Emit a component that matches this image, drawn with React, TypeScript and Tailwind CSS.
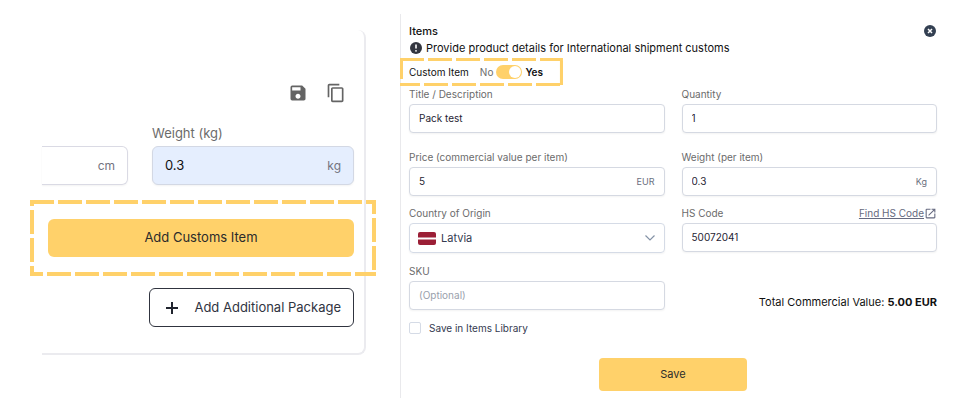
import { useState, type ReactNode } from 'react'
import { MdContentCopy, MdOutlineOpenInNew, MdSave } from 'react-icons/md'

type DashedFrameProps = {
  thickness: number
  offsets: { top: number; right: number; bottom: number; left: number }
}

type FieldProps = {
  id: string
  label: string
  defaultValue?: string
  placeholder?: string
  unit?: string
  action?: ReactNode
}

// Strokes sit on the edges of the svg, so only the inner half is painted
function DashedFrame({ thickness, offsets }: DashedFrameProps) {
  return (
    <svg
      aria-hidden="true"
      className="absolute inset-0 h-full w-full pointer-events-none"
      stroke="#ffd16a"
      strokeWidth={thickness * 2}
      strokeDasharray="24 4"
    >
      <line x1="0" y1="0" x2="100%" y2="0" strokeDashoffset={offsets.top} />
      <line x1="100%" y1="0" x2="100%" y2="100%" strokeDashoffset={offsets.right} />
      <line x1="0" y1="100%" x2="100%" y2="100%" strokeDashoffset={offsets.bottom} />
      <line x1="0" y1="0" x2="0" y2="100%" strokeDashoffset={offsets.left} />
    </svg>
  )
}

function Field({ id, label, defaultValue, placeholder, unit, action }: FieldProps) {
  return (
    <div>
      <div className="flex items-center justify-between h-4 mb-0.5">
        <label htmlFor={id} className="text-[10px] text-[#6b6b6b]">{label}</label>
        {action}
      </div>
      <div className="flex items-center h-[29px] px-[9px] rounded border border-[#d5d9e2] bg-white shadow-xs">
        <input
          id={id}
          type="text"
          defaultValue={defaultValue}
          placeholder={placeholder}
          className="flex-1 min-w-0 text-[10px] text-[#1f2433] placeholder:text-[#9a9fac] outline-none"
        />
        {unit && <span className="text-[9px] text-[#6b7080]">{unit}</span>}
      </div>
    </div>
  )
}

function PackageCard() {
  return (
    <section className="min-w-0 mt-[30px] pl-1.5 pr-2.5 pt-[53px] pb-[26px] border-r-2 border-b-2 border-[#ebebef] rounded-r-lg">
      <div className="flex justify-end gap-[18px] pr-2 text-[#646464]">
        <button type="button" aria-label="Save package" className="cursor-pointer">
          <MdSave size={20} />
        </button>
        <button type="button" aria-label="Copy package" className="cursor-pointer">
          <MdContentCopy size={20} />
        </button>
      </div>

      <div className="grid grid-cols-[86fr_202fr] items-end gap-6 -ml-1.5 mt-5">
        <div className="flex items-center min-w-0 h-[39px] pr-3 rounded-r-md border border-l-0 border-[#dadae4] shadow-xs">
          <input type="text" aria-label="Length" className="flex-1 min-w-0 text-[13px] outline-none" />
          <span className="text-xs text-[#73737f]">cm</span>
        </div>
        <div className="min-w-0">
          <label htmlFor="package-weight" className="block h-5 mb-[3px] text-[13px] leading-5 text-[#6b6b6b]">
            Weight (kg)
          </label>
          <div className="flex items-center h-[39px] px-3 rounded-md border border-[#d3d8e4] bg-[#e5eefe] shadow-xs">
            <input
              id="package-weight"
              type="text"
              defaultValue="0.3"
              className="flex-1 min-w-0 text-[13px] text-[#111111] outline-none"
            />
            <span className="text-xs text-[#73737f]">kg</span>
          </div>
        </div>
      </div>

      <div className="relative -ml-[18px] -mr-[22px] mt-[15px] py-[19px] pl-[18px] pr-[22px]">
        <button type="button" className="block w-full h-[38px] rounded-md bg-[#ffd16a] text-[13px] text-[#2b2b2b] cursor-pointer">
          Add Customs Item
        </button>
        <DashedFrame thickness={4} offsets={{ top: 0, right: 10, bottom: 11, left: 18 }} />
      </div>

      <div className="flex justify-end mt-3">
        <button
          type="button"
          className="flex items-center gap-3 h-[39px] px-3 rounded-md border border-[#30343f] text-[13px] whitespace-nowrap text-[#30343f] cursor-pointer"
        >
          <svg width="20" height="20" viewBox="0 0 20 20" fill="none" stroke="#20242e" strokeWidth="2"><path d="M4 10h12M10 4v12" /></svg>
          Add Additional Package
        </button>
      </div>
    </section>
  )
}

function ItemsDialog() {
  const [isCustom, setIsCustom] = useState(true)

  return (
    <section className="min-w-0 mt-3.5 pt-[9px] px-2 pb-[7px] border-l border-[#e9e9ec]">
      <div className="flex items-center justify-between h-4 pr-px">
        <h2 className="text-[11px] font-medium text-[#111111]">Items</h2>
        <button type="button" aria-label="Close" className="cursor-pointer">
          <svg width="12" height="12" viewBox="0 0 12 12">
            <circle cx="6" cy="6" r="6" fill="#334052" />
            <path d="M4 4l4 4M8 4l-4 4" stroke="#fff" strokeWidth="1.5" />
          </svg>
        </button>
      </div>
      <p className="flex items-center gap-1 h-[18px] pl-px text-[11px] text-[#111111]">
        <svg width="12" height="12" viewBox="0 0 12 12" className="shrink-0">
          <circle cx="6" cy="6" r="6" fill="#33363f" />
          <path d="M6 2.5v4" stroke="#fff" strokeWidth="1.6" />
          <circle cx="6" cy="8.8" r="0.9" fill="#fff" />
        </svg>
        Provide product details for International shipment customs
      </p>

      <div className="relative flex items-center w-fit h-7 -ml-[9px] mt-px pl-[9px] pr-5 text-[10px] text-[#111111]">
        <span className="mr-[11px]">Custom Item</span>
        <label className="flex items-center gap-[3px] cursor-pointer">
          <span className="text-[#6b6b6b]">No</span>
          <input
            type="checkbox"
            aria-label="Custom Item"
            checked={isCustom}
            onChange={(e) => setIsCustom(e.target.checked)}
            className="peer sr-only"
          />
          <span className="flex items-center w-[26px] h-3.5 p-px rounded-full bg-gray-300 peer-checked:bg-[#ffd16a] peer-checked:justify-end">
            <span className="w-3 h-3 rounded-full bg-white" />
          </span>
          <span className="font-semibold">Yes</span>
        </label>
        <DashedFrame thickness={3} offsets={{ top: 0, right: 25, bottom: 4, left: 3 }} />
      </div>

      <div className="grid grid-cols-2 gap-x-[17px]">
        <Field id="title" label="Title / Description" defaultValue="Pack test" />
        <Field id="quantity" label="Quantity" defaultValue="1" />
      </div>
      <div className="grid grid-cols-2 gap-x-[17px] mt-4">
        <Field id="price" label="Price (commercial value per item)" defaultValue="5" unit="EUR" />
        <Field id="item-weight" label="Weight (per item)" defaultValue="0.3" unit="Kg" />
      </div>
      <div className="grid grid-cols-2 gap-x-[17px] mt-[9px]">
        <div>
          <label htmlFor="country" className="flex items-center h-4 mb-0.5 text-[10px] text-[#6b6b6b]">Country of Origin</label>
          <div className="flex items-center h-[30px] px-2 rounded border border-[#d5dbe6] shadow-xs">
            <svg width="18" height="13" viewBox="0 0 18 13" aria-hidden="true">
              <rect width="18" height="13" rx="2" fill="#9b1f36" />
              <rect y="5.500" width="18" height="2" fill="#fff" />
            </svg>
            <select id="country" defaultValue="LV" className="flex-1 min-w-0 pl-[5px] appearance-none text-[11px] text-[#343a50] outline-none">
              <option value="LV">Latvia</option>
              <option value="LT">Lithuania</option>
              <option value="EE">Estonia</option>
            </select>
            <svg width="12" height="12" viewBox="0 0 12 12" fill="none" stroke="#8492a6" strokeWidth="1.2">
              <path d="M1.5 3.5L6 8l4.500-4.500" />
            </svg>
          </div>
        </div>
        <Field
          id="hs-code"
          label="HS Code"
          defaultValue="50072041"
          action={
            <a href="#hs-code" className="flex items-center text-[10px] text-[#666a80]">
              <span className="underline">Find HS Code</span>
              <MdOutlineOpenInNew size={13} />
            </a>
          }
        />
      </div>
      <div className="grid grid-cols-2 gap-x-[17px] mt-2.5">
        <Field id="sku" label="SKU" placeholder="(Optional)" />
        <p className="self-end text-right text-[11px] text-[#111111]">
          Total Commercial Value: <strong>5.00 EUR</strong>
        </p>
      </div>

      <label className="flex items-center w-fit gap-2 h-4 mt-2.5 text-[10px] text-[#343a50]">
        <input type="checkbox" className="w-3 h-3 appearance-none rounded-xs border border-[#d5dbe6] checked:bg-[#ffd16a]" />
        Save in Items Library
      </label>

      <div className="flex justify-center mt-[22px]">
        <button type="button" className="w-[148px] h-[33px] rounded bg-[#ffd16a] text-[11px] text-[#2b2b2b] cursor-pointer">
          Save
        </button>
      </div>
    </section>
  )
}

export default function App() {
  return (
    <main className="grid grid-cols-[324fr_545fr] items-start gap-[34px] pl-[42px] pr-3.5 bg-white font-[Inter,sans-serif]">
      <PackageCard />
      <ItemsDialog />
    </main>
  )
}
